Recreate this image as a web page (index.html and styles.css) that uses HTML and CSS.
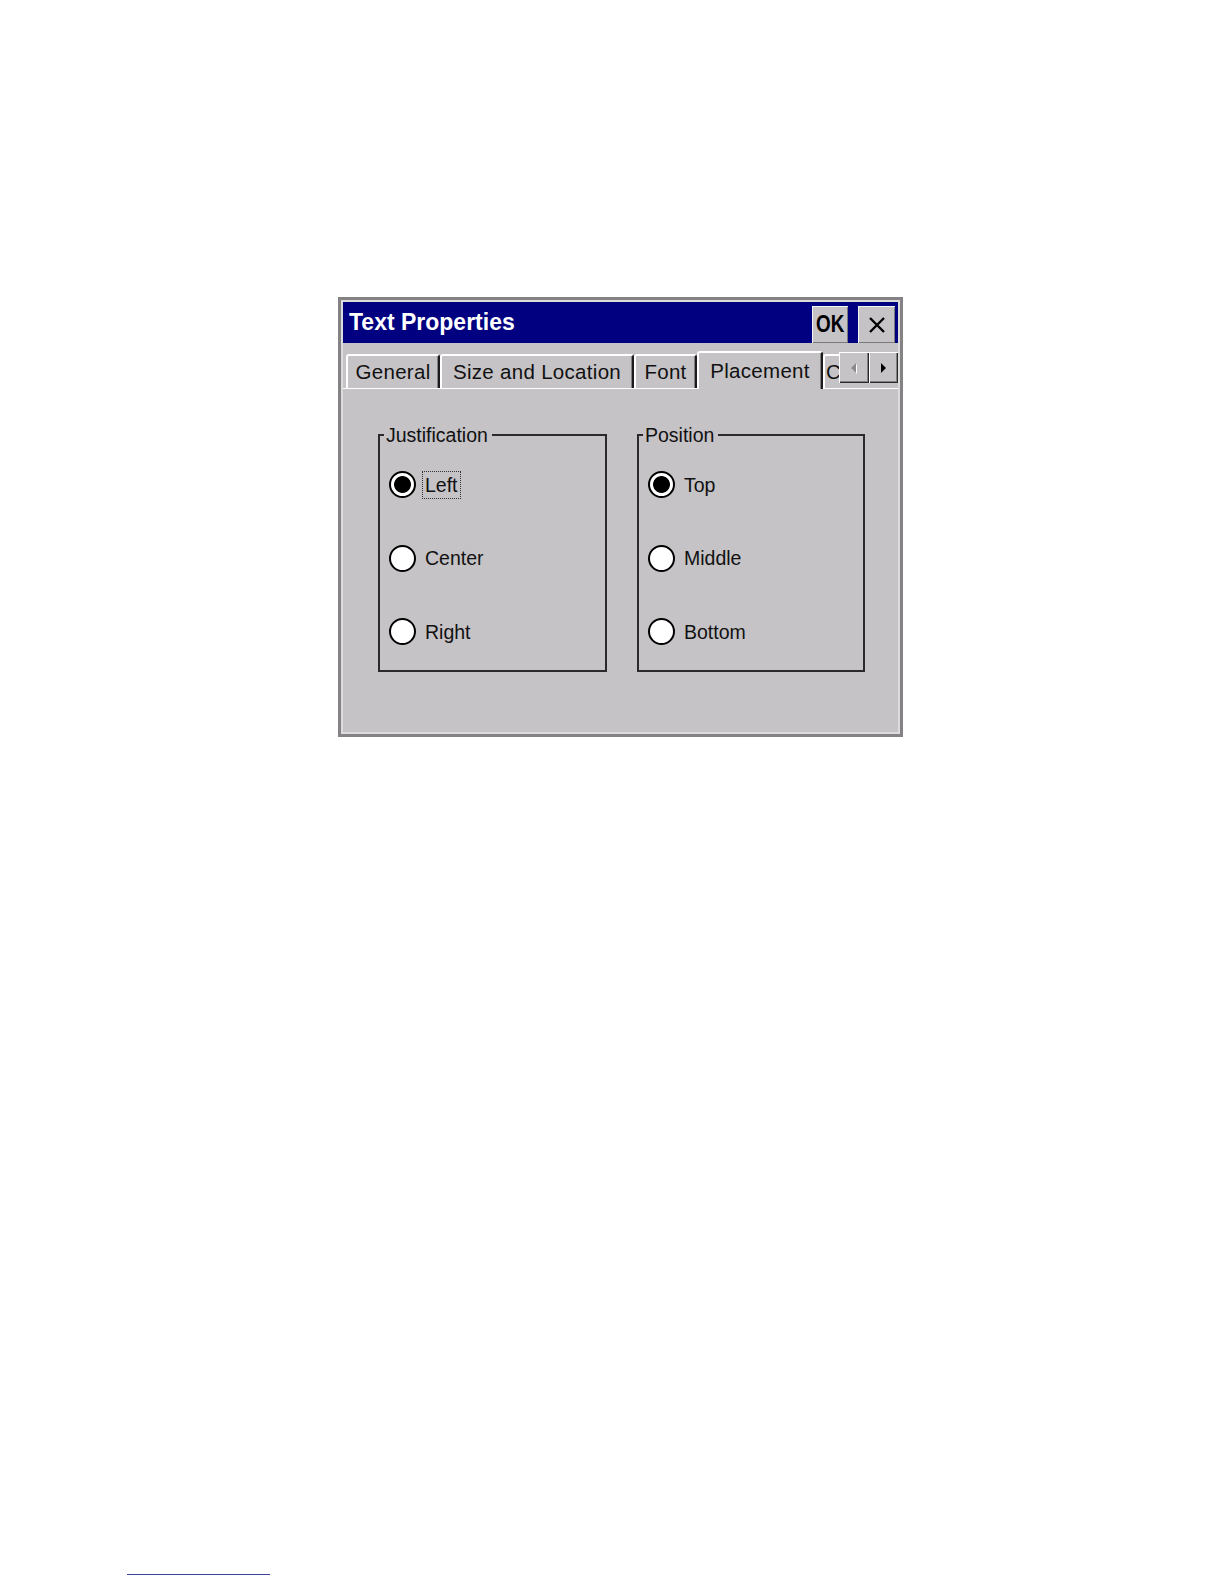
FILE: index.html
```html
<!DOCTYPE html>
<html lang="en">
<head>
<meta charset="utf-8">
<title>Text Properties</title>
<link rel="stylesheet" href="styles.css">
</head>
<body>
<div class="dialog">
  <div class="titlebar">
    <span class="title">Text Properties</span>
    <div class="title-buttons">
      <div class="tbtn ok"><span class="ok-text">OK</span></div>
      <div class="tbtn close">
        <svg width="18" height="18" viewBox="0 0 18 18"><path d="M2 2 L16 16 M16 2 L2 16" stroke="#000" stroke-width="2.4" fill="none"/></svg>
      </div>
    </div>
  </div>
  <div class="tabstrip">
    <div class="tab w-general">General</div>
    <div class="tab w-size">Size and Location</div>
    <div class="tab w-font">Font</div>
    <div class="tab w-place selected">Placement</div>
    <div class="tab partial">C</div>
    <div class="scroll">
      <div class="arrow">
        <svg width="10" height="14" viewBox="0 0 10 14"><polygon points="7,2 2,7 7,12" fill="#fff" transform="translate(1,1)"/><polygon points="7,2 2,7 7,12" fill="#8a8a8a"/></svg>
      </div>
      <div class="arrow">
        <svg width="10" height="14" viewBox="0 0 10 14"><polygon points="3,2 8,7 3,12" fill="#000"/></svg>
      </div>
    </div>
  </div>
  <div class="panel">
    <fieldset class="group g-just">
      <legend>Justification</legend>
      <div class="options">
        <div class="opt"><span class="radio on"></span><span class="label focus">Left</span></div>
        <div class="opt"><span class="radio"></span><span class="label">Center</span></div>
        <div class="opt"><span class="radio"></span><span class="label">Right</span></div>
      </div>
    </fieldset>
    <fieldset class="group g-pos">
      <legend>Position</legend>
      <div class="options">
        <div class="opt"><span class="radio on"></span><span class="label">Top</span></div>
        <div class="opt"><span class="radio"></span><span class="label">Middle</span></div>
        <div class="opt"><span class="radio"></span><span class="label">Bottom</span></div>
      </div>
    </fieldset>
  </div>
</div>
<div class="footline"></div>
</body>
</html>
```
FILE: styles.css
```css
body {
  margin: 0;
  background: #ffffff;
  font-family: "Liberation Sans", Arial, sans-serif;
}

.dialog {
  margin: 297px 0 0 338px;
  width: 565px;
  height: 440px;
  box-sizing: border-box;
  border: 3px solid #848284;
  padding: 2px;
  background: #c6c3c6;
  box-shadow: inset 0 0 0 2px #dcdcdc;
  display: flex;
  flex-direction: column;
}

.titlebar {
  height: 41px;
  flex: none;
  background: #000080;
  display: flex;
  align-items: center;
  justify-content: space-between;
  padding: 0 3px 0 6px;
}

.title {
  color: #ffffff;
  font-weight: bold;
  font-size: 23px;
}

.title-buttons {
  display: flex;
  gap: 10px;
  align-self: flex-end;
}

.tbtn {
  width: 36px;
  height: 37px;
  background: #c6c3c6;
  box-shadow: inset 1px 1px #f4f4f4, inset -1px -1px #7a7a7a;
  display: flex;
  align-items: center;
  justify-content: center;
}

.ok-text {
  display: inline-block;
  font-weight: bold;
  font-size: 23px;
  color: #000;
  transform: scaleX(0.82);
}

.tbtn.close {
  width: 37px;
}

.tabstrip {
  height: 45px;
  flex: none;
  display: flex;
  align-items: flex-end;
  padding-left: 3px;
}

.tab {
  height: 34px;
  box-sizing: border-box;
  border-top: 2px solid #ffffff;
  border-left: 2px solid #ffffff;
  border-right: 2px solid #1c1c1c;
  border-radius: 3px 3px 0 0;
  box-shadow: inset -1px 0 #808080;
  background: #c6c3c6;
  font-size: 20.5px;
  letter-spacing: 0.3px;
  color: #111;
  display: flex;
  align-items: center;
  justify-content: center;
  white-space: nowrap;
  flex: none;
}

.w-general { width: 94px; }
.w-size { width: 194px; }
.w-font { width: 63px; }
.w-place { width: 126px; }

.tab.selected {
  height: 38px;
  margin-bottom: -1px;
  position: relative;
  z-index: 1;
}

.tab.partial {
  width: 16px;
  justify-content: flex-start;
  padding-left: 1px;
  border-right: none;
  box-shadow: none;
  border-radius: 3px 0 0 0;
}

.scroll {
  display: flex;
  align-self: flex-start;
  margin-top: 9px;
  flex: none;
}

.arrow {
  width: 29.5px;
  height: 31px;
  box-sizing: border-box;
  background: #c6c3c6;
  box-shadow: inset 1px 1px #ffffff, inset -1px -1px #2a2a2a, inset -2px -2px #808080;
  display: flex;
  align-items: center;
  justify-content: center;
}

.panel {
  flex: 1;
  border-top: 1px solid #ffffff;
  display: flex;
  align-items: flex-start;
  gap: 30px;
  padding: 35px 0 0 35px;
}

.group {
  margin: 0;
  padding: 25px 0 0 9px;
  border: 2px solid #2a2a2a;
  height: 248px;
  box-sizing: border-box;
  min-width: 0;
}

.g-just { width: 229px; }
.g-pos { width: 228px; }

.group legend {
  font-size: 19.5px;
  line-height: 22px;
  padding: 0 4px 0 2px;
  margin-left: -5px;
  color: #111;
}

.options {
  display: flex;
  flex-direction: column;
  gap: 46.5px;
}

.opt {
  display: flex;
  align-items: center;
  height: 27px;
}

.radio {
  width: 27px;
  height: 27px;
  box-sizing: border-box;
  border: 2px solid #000;
  border-radius: 50%;
  background: #ffffff;
  flex: none;
}

.radio.on {
  background: radial-gradient(circle, #000 0 8px, #fff 8.8px);
}

.label {
  margin-left: 6px;
  padding: 1px 2px;
  border: 1px dotted transparent;
  font-size: 19.5px;
  line-height: 24px;
  color: #111;
}

.label.focus {
  border-color: #333;
}

.footline {
  margin: 837px 0 0 127px;
  width: 143px;
  height: 1px;
  background: #3a44a0;
}
```
